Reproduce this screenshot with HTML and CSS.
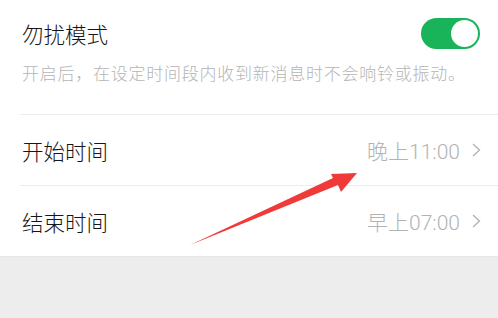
FILE: index.html
```html
<!DOCTYPE html>
<html lang="zh-CN">
<head>
<meta charset="utf-8">
<link rel="stylesheet" href="styles.css">
</head>
<body>
<div class="page">
  <section class="dnd">
    <div class="dnd-head">
      <span class="title">勿扰模式</span>
      <span class="switch"><span class="knob"></span></span>
    </div>
    <p class="desc">开启后，在设定时间段内收到新消息时不会响铃或振动。</p>
  </section>
  <div class="row">
    <span class="label">开始时间</span>
    <span class="value">晚上11:00<svg class="chev" width="9" height="14" viewBox="0 0 9 14"><path d="M1 1 L7.5 7 L1 13" fill="none" stroke="#b4b4b4" stroke-width="1.4"/></svg></span>
  </div>
  <div class="row">
    <span class="label">结束时间</span>
    <span class="value">早上07:00<svg class="chev" width="9" height="14" viewBox="0 0 9 14"><path d="M1 1 L7.5 7 L1 13" fill="none" stroke="#b4b4b4" stroke-width="1.4"/></svg></span>
  </div>
  <div class="footer"></div>
  <svg class="arrow" width="498" height="318" viewBox="0 0 498 318">
    <polygon points="190,245 333,178 331,174 357,173 341,192 338,185" fill="#f03a3a"/>
  </svg>
</div>
</body>
</html>
```
FILE: styles.css
```css
html, body {
  margin: 0;
  padding: 0;
  background: #ffffff;
}
body {
  font-family: "Noto Sans CJK SC", "Noto Sans", sans-serif;
  width: 498px;
  height: 318px;
  overflow: hidden;
}
.page {
  position: relative;
  display: flex;
  flex-direction: column;
  height: 318px;
}
.dnd {
  padding: 18px 18px 0 22px;
  height: 96px;
}
.dnd-head {
  display: flex;
  align-items: center;
  justify-content: space-between;
  height: 31px;
}
.title {
  font-size: 21.5px;
  font-weight: 300;
  color: #161616;
  line-height: 31px;
}
.switch {
  width: 59px;
  height: 31px;
  border-radius: 16px;
  background: #19b35a;
  display: flex;
  align-items: center;
  justify-content: flex-end;
  padding-right: 2px;
  box-sizing: border-box;
}
.knob {
  width: 27px;
  height: 27px;
  border-radius: 50%;
  background: #ffffff;
}
.desc {
  margin: 12px 0 0 0;
  font-size: 17px;
  font-weight: 300;
  letter-spacing: 0.75px;
  line-height: 24px;
  color: #b5b5b5;
  white-space: nowrap;
}
.row {
  margin-left: 20px;
  height: 71px;
  border-top: 1px solid #ececec;
  display: flex;
  align-items: center;
  justify-content: space-between;
  padding: 0 17px 0 2px;
  box-sizing: border-box;
}
.label {
  font-size: 21.5px;
  font-weight: 300;
  color: #161616;
}
.value {
  display: flex;
  align-items: center;
  font-family: Roboto, "Noto Sans CJK SC", sans-serif;
  font-weight: 300;
  font-size: 21px;
  color: #b2b2b2;
}
.chev {
  margin-left: 12px;
  display: block;
}
.footer {
  flex: 1;
  background: #ededed;
  border-top: 1px solid #e6e6e6;
}
.arrow {
  position: absolute;
  left: 0;
  top: 0;
  pointer-events: none;
}
```
